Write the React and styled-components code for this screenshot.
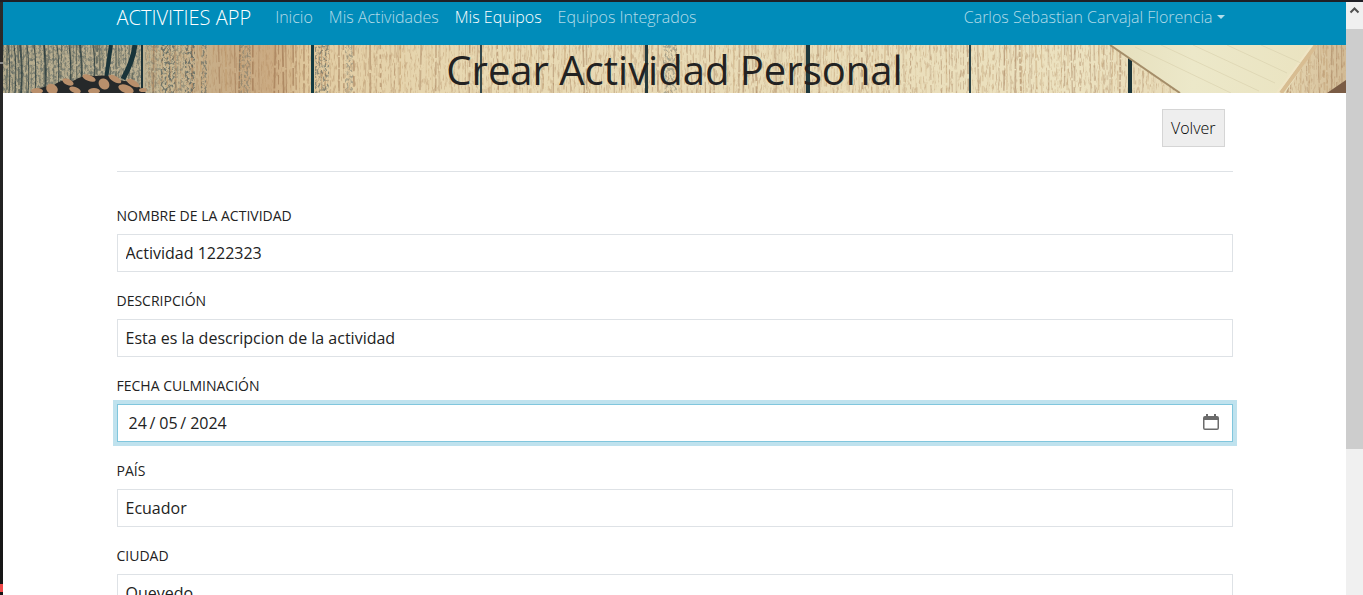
import React from "react";
import styled, { createGlobalStyle, css } from "styled-components";

const GlobalStyle = createGlobalStyle`
  *, *::before, *::after { box-sizing: border-box; }
  body {
    margin: 0;
    background: #fff;
    color: #222;
    font-family: "Open Sans", "Noto Sans", sans-serif;
    font-size: 16px;
    line-height: 24px;
  }
`;

const Frame = styled.div`
  display: flex;
  height: 100vh;
  overflow: hidden;
  border-top: 2px solid #1f1f26;
`;

const Edge = styled.div`
  flex: none;
  width: 3px;
  background: linear-gradient(#2b2b2b, #1c1c1c 60%, #161616);
  display: flex;
  flex-direction: column;
  justify-content: space-between;
  padding: 60px 0 3px;
`;

const EdgeMark = styled.span`
  height: ${(p) => p.$size}px;
  background: ${(p) => p.$color};
`;

const Page = styled.div`
  flex: 1;
  min-width: 0;
  overflow: hidden;
`;

const Container = styled.div`
  width: 100%;
  max-width: 1140px;
  margin: 0 auto;
  padding: 0 12px;
`;

const NavBar = styled.nav`
  height: 43px;
  background: #008cba;
  font-weight: 300;
`;

const NavInner = styled(Container)`
  display: flex;
  align-items: flex-start;
`;

const Brand = styled.a`
  margin-right: 16px;
  color: #fff;
  font-size: 20px;
  line-height: 32px;
  text-decoration: none;
  white-space: nowrap;
`;

const NavLinks = styled.div`
  display: flex;
  flex: 1;
`;

const NavLink = styled.a`
  padding: 3px 8px;
  color: ${(p) => (p.$active ? "#fff" : "rgba(255, 255, 255, 0.7)")};
  text-decoration: none;
  white-space: nowrap;
`;

const UserButton = styled.button`
  display: flex;
  align-items: center;
  gap: 4px;
  padding: 3px 8px;
  border: 0;
  background: none;
  color: rgba(255, 255, 255, 0.7);
  font: inherit;
  white-space: nowrap;
`;

const Caret = styled.span`
  border: 4px solid transparent;
  border-top-color: currentColor;
  border-bottom: 0;
`;

const Banner = styled.header`
  display: grid;
  grid-template-rows: 48px;

  > * { grid-area: 1 / 1; }
`;

const Wood = styled.svg`
  display: block;
  width: 100%;
  height: 48px;
`;

const Title = styled.h1`
  z-index: 1;
  margin: 0;
  font-size: 40px;
  line-height: 50px;
  font-weight: 400;
  text-align: center;
`;

const Actions = styled.div`
  display: flex;
  justify-content: flex-end;
  padding: 16px 8px 24px;
`;

const BackButton = styled.button`
  height: 38px;
  padding: 0 8px;
  border: 1px solid #d5d5d5;
  background: #eee;
  color: #000;
  font: inherit;
  font-weight: 300;
`;

const Divider = styled.hr`
  margin: 0 0 32px;
  border: 0;
  border-top: 1px solid #dee2e6;
`;

const Field = styled.div`
  margin-bottom: 17px;
`;

const Label = styled.label`
  display: block;
  margin-bottom: 6px;
  font-size: 14px;
  line-height: 24px;
  text-transform: uppercase;
`;

const Control = styled.div`
  display: flex;
  align-items: center;
  height: 38px;
  border: 1px solid #dee2e6;
  padding: 0 8px;
  ${(p) =>
    p.$focused &&
    css`
      padding: 0 13px 0 11px;
      border-color: #80c6dd;
      box-shadow: 0 0 0 4px #bfe2ee;
    `}
`;

const Input = styled.input`
  flex: 1;
  min-width: 0;
  height: 36px;
  padding: 0;
  border: 0;
  outline: 0;
  background: none;
  color: #222;
  font: inherit;
`;

const PickerButton = styled.button`
  display: flex;
  padding: 0 0 2px;
  border: 0;
  background: none;
`;

const ScrollTrack = styled.div`
  flex: none;
  display: flex;
  flex-direction: column;
  width: 17px;
  background: #f0f0f0;
`;

const ScrollArrow = styled.svg`
  flex: none;
  width: 17px;
  height: 27px;
`;

const ScrollThumb = styled.div`
  height: 420px;
  background: #cdcdcd;
`;

const seams = [
  [139, 2, "#1d3338"],
  [309, 3, "#123a42"],
  [478, 2, "#33474a"],
  [643, 3, "#24393c"],
  [804, 4, "#1f383c"],
  [967, 2, "#2d4346"],
  [1126, 4, "#1b3438"],
];

// Small seeded generator so the grain is the same on every render.
function makeGrain() {
  let seed = 7;
  const rand = () => {
    seed = (seed * 16807) % 2147483647;
    return seed / 2147483647;
  };
  const lines = [];
  for (let x = 0; x < 1343; x += 2 + rand() * 4) {
    const fade = x < 139 ? 0.5 : x < 309 ? 0.4 : 0.35;
    lines.push({
      x,
      lean: (rand() - 0.5) * 3,
      width: 0.6 + rand() * 1.4,
      dash: `${4 + rand() * 22} ${1 + rand() * 5}`,
      opacity: fade * (0.3 + rand() * 0.9),
      color: x < 139 ? "#2f3f3d" : rand() > 0.5 ? "#8a5c3a" : "#b9905f",
    });
  }
  return lines;
}

const grain = makeGrain();

function WoodTexture() {
  return (
    <Wood viewBox="0 0 1343 48" preserveAspectRatio="xMidYMid slice" aria-hidden="true">
      <defs>
        <linearGradient id="wood">
          <stop offset="0" stopColor="#b5ab8d" />
          <stop offset="0.1" stopColor="#bbb092" />
          <stop offset="0.12" stopColor="#c9ba96" />
          <stop offset="0.16" stopColor="#c8ad87" />
          <stop offset="0.2" stopColor="#cbab83" />
          <stop offset="0.225" stopColor="#dfc89d" />
          <stop offset="0.25" stopColor="#e3cfa6" />
          <stop offset="0.35" stopColor="#e8d9b3" />
          <stop offset="0.6" stopColor="#e9dcb8" />
          <stop offset="0.8" stopColor="#ece2c0" />
          <stop offset="0.96" stopColor="#e3d3ae" />
          <stop offset="1" stopColor="#d2bb96" />
        </linearGradient>
        <linearGradient id="paper">
          <stop offset="0" stopColor="#e6dfbd" />
          <stop offset="0.4" stopColor="#ece8c9" />
          <stop offset="1" stopColor="#eae3c0" />
        </linearGradient>
        <filter id="darkSpeck" x="0" y="0" width="100%" height="100%">
          <feTurbulence type="fractalNoise" baseFrequency="0.5 0.3" numOctaves="3" seed="4" />
          <feColorMatrix values="0 0 0 0 0.1  0 0 0 0 0.13  0 0 0 0 0.12  5 0 0 0 -2.3" />
        </filter>
        <filter id="brownSpeck" x="0" y="0" width="100%" height="100%">
          <feTurbulence type="fractalNoise" baseFrequency="0.6 0.12" numOctaves="3" seed="9" />
          <feColorMatrix values="0 0 0 0 0.4  0 0 0 0 0.22  0 0 0 0 0.1  5 0 0 0 -2.7" />
        </filter>
      </defs>
      <rect width="1343" height="48" fill="url(#wood)" />
      {grain.map((g) => (
        <path
          key={g.x}
          d={`M${g.x} 0L${g.x + g.lean} 48`}
          stroke={g.color}
          strokeWidth={g.width}
          strokeDasharray={g.dash}
          opacity={g.opacity}
        />
      ))}
      <rect width="139" height="48" filter="url(#darkSpeck)" opacity="0.6" />
      <rect x="142" width="16" height="48" filter="url(#darkSpeck)" opacity="0.35" />
      <rect x="158" width="14" height="48" filter="url(#darkSpeck)" opacity="0.8" />
      <rect x="172" width="10" height="48" filter="url(#darkSpeck)" opacity="0.4" />
      <rect x="182" width="10" height="48" filter="url(#darkSpeck)" opacity="0.8" />
      <rect x="198" width="6" height="48" filter="url(#darkSpeck)" opacity="0.6" />
      <rect x="236" width="12" height="48" filter="url(#darkSpeck)" opacity="0.4" />
      <rect x="312" width="14" height="48" filter="url(#darkSpeck)" opacity="0.6" />
      <rect x="342" width="8" height="48" filter="url(#darkSpeck)" opacity="0.4" />
      <rect x="660" width="14" height="48" filter="url(#darkSpeck)" opacity="0.4" />
      <rect x="142" width="1201" height="48" filter="url(#brownSpeck)" opacity="0.35" />
      {[5, 11, 17, 24, 31, 41, 54, 66, 77, 90].map((x, i) => (
        <path
          key={x}
          d={`M${x} 0q3 22 1 48`}
          fill="none"
          stroke="#203438"
          strokeWidth={i % 3 === 2 ? 2 : 1}
          opacity="0.75"
        />
      ))}
      <path d="M108 0L103 34" stroke="#19343a" strokeWidth="4" />
      <path d="M132 0Q130 16 120 34" fill="none" stroke="#19343a" strokeWidth="5" />
      {seams.map(([x, w, c]) => (
        <rect key={x} x={x - 1} width={w} height="48" fill={c} />
      ))}
      <path d="M28 48Q36 41 50 41Q58 33 70 36Q82 29 92 31Q106 29 116 35Q132 36 143 48Z" fill="#26292a" />
      <g fill="#b98f6b">
        <ellipse cx="34" cy="46" rx="6" ry="3" />
        <ellipse cx="49" cy="44" rx="6" ry="5" transform="rotate(30 49 44)" />
        <ellipse cx="65" cy="37" rx="6" ry="3" transform="rotate(25 65 37)" />
        <ellipse cx="72" cy="45" rx="6" ry="3" transform="rotate(20 72 45)" />
        <ellipse cx="86" cy="33" rx="7" ry="3" transform="rotate(20 86 33)" />
        <ellipse cx="101" cy="39" rx="5" ry="6" transform="rotate(-40 101 39)" />
        <ellipse cx="91" cy="46" rx="6" ry="3" />
        <ellipse cx="112" cy="34" rx="7" ry="3" transform="rotate(30 112 34)" />
        <ellipse cx="123" cy="44" rx="8" ry="4" transform="rotate(20 123 44)" />
        <ellipse cx="130" cy="38" rx="7" ry="3" transform="rotate(30 130 38)" />
        <ellipse cx="140" cy="45" rx="4" ry="2" />
      </g>
      <path d="M1107 0L1177 48H1282L1314 0Z" fill="url(#paper)" />
      <path d="M1107 0L1177 48" stroke="#a58e69" strokeWidth="2" />
      <path d="M1313 0L1278 48" stroke="#d8bd92" strokeWidth="4" />
      <path d="M1309 0L1274 48" stroke="#f0e6c6" strokeWidth="2" />
      <path
        d="M1132 2L1228 48M1158 0L1256 46M1190 0L1272 38M1224 0L1284 28M1258 0L1298 18"
        stroke="#dbd3b0"
        strokeWidth="1"
        opacity="0.7"
      />
      <path d="M1343 35L1324 48H1343Z" fill="#7a5c45" />
    </Wood>
  );
}

function CalendarIcon() {
  return (
    <svg width="16" height="16" viewBox="0 0 16 16" aria-hidden="true">
      <path
        d="M3 0h2v2h6V0h2v2h1q2 0 2 2v10q0 2-2 2H2q-2 0-2-2V4q0-2 2-2h1ZM1.500 6v8q0 .5.500.500h12q.5 0 .5-.5V6Z"
        fill="#6b6b6b"
        fillRule="evenodd"
      />
    </svg>
  );
}

const links = [
  { text: "Inicio" },
  { text: "Mis Actividades" },
  { text: "Mis Equipos", active: true },
  { text: "Equipos Integrados" },
];

const fields = [
  { id: "nombre", label: "Nombre de la actividad", value: "Actividad 1222323" },
  { id: "descripcion", label: "Descripción", value: "Esta es la descripcion de la actividad" },
  { id: "fecha", label: "Fecha culminación", value: "24\u2009/\u200505\u2009/\u20052024", date: true },
  { id: "pais", label: "País", value: "Ecuador" },
  { id: "ciudad", label: "Ciudad", value: "Quevedo" },
];

export default function App() {
  return (
    <>
      <GlobalStyle />
      <Frame>
        <Edge>
          <EdgeMark $size={2} $color="#8a8a8a" />
          <EdgeMark $size={8} $color="#f04a4a" />
        </Edge>
        <Page>
          <NavBar>
            <NavInner>
              <Brand href="#">ACTIVITIES APP</Brand>
              <NavLinks>
                {links.map((l) => (
                  <NavLink key={l.text} href="#" $active={l.active}>
                    {l.text}
                  </NavLink>
                ))}
              </NavLinks>
              <UserButton type="button">
                Carlos Sebastian Carvajal Florencia
                <Caret />
              </UserButton>
            </NavInner>
          </NavBar>
          <Banner>
            <WoodTexture />
            <Title>Crear Actividad Personal</Title>
          </Banner>
          <Container as="main">
            <Actions>
              <BackButton type="button">Volver</BackButton>
            </Actions>
            <Divider />
            <form>
              {fields.map((f) => (
                <Field key={f.id}>
                  <Label htmlFor={f.id}>{f.label}</Label>
                  <Control $focused={f.date}>
                    <Input id={f.id} type="text" defaultValue={f.value} />
                    {f.date && (
                      <PickerButton type="button" aria-label="Abrir calendario">
                        <CalendarIcon />
                      </PickerButton>
                    )}
                  </Control>
                </Field>
              ))}
            </form>
          </Container>
        </Page>
        <ScrollTrack aria-hidden="true">
          <ScrollArrow viewBox="0 0 17 27">
            <path d="M4.500 10.500L8.500 6.500L12.500 10.500" fill="none" stroke="#505050" strokeWidth="2" />
          </ScrollArrow>
          <ScrollThumb />
        </ScrollTrack>
      </Frame>
    </>
  );
}
